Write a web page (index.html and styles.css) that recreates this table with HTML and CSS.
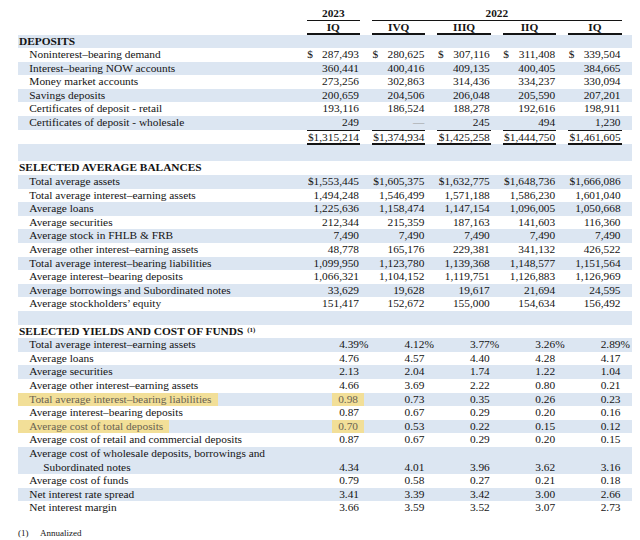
FILE: index.html
```html
<!DOCTYPE html>
<html>
<head>
<meta charset="utf-8">
<link rel="stylesheet" href="styles.css">
</head>
<body>
<div class="page">
  <div class="row head-a">
    <div class="c1 yr">2023</div>
    <div class="c2-5 yr">2022</div>
  </div>
  <div class="row head-b">
    <div class="c1 q">IQ</div>
    <div class="q">IVQ</div>
    <div class="q">IIIQ</div>
    <div class="q">IIQ</div>
    <div class="q">IQ</div>
  </div>

  <div class="rows">
    <div class="row"><div class="sec">DEPOSITS</div></div>
    <div class="row"><div class="lbl">Noninterest–bearing demand</div><div class="v d">$<span>287,493</span></div><div class="v d">$<span>280,625</span></div><div class="v d">$<span>307,116</span></div><div class="v d">$<span>311,408</span></div><div class="v d">$<span>339,504</span></div></div>
    <div class="row"><div class="lbl">Interest–bearing NOW accounts</div><div class="v">360,441</div><div class="v">400,416</div><div class="v">409,135</div><div class="v">400,405</div><div class="v">384,665</div></div>
    <div class="row"><div class="lbl">Money market accounts</div><div class="v">273,256</div><div class="v">302,863</div><div class="v">314,436</div><div class="v">334,237</div><div class="v">330,094</div></div>
    <div class="row"><div class="lbl">Savings deposits</div><div class="v">200,659</div><div class="v">204,506</div><div class="v">206,048</div><div class="v">205,590</div><div class="v">207,201</div></div>
    <div class="row"><div class="lbl">Certificates of deposit - retail</div><div class="v">193,116</div><div class="v">186,524</div><div class="v">188,278</div><div class="v">192,616</div><div class="v">198,911</div></div>
    <div class="row"><div class="lbl">Certificates of deposit - wholesale</div><div class="v">249</div><div class="v dash">—</div><div class="v">245</div><div class="v">494</div><div class="v">1,230</div></div>
    <div class="row total"><div class="lbl"></div><div class="v">$1,315,214</div><div class="v">$1,374,934</div><div class="v">$1,425,258</div><div class="v">$1,444,750</div><div class="v">$1,461,605</div></div>
    <div class="row blank blank-a"></div>

    <div class="row"><div class="sec">SELECTED AVERAGE BALANCES</div></div>
    <div class="row"><div class="lbl">Total average assets</div><div class="v">$1,553,445</div><div class="v">$1,605,375</div><div class="v">$1,632,775</div><div class="v">$1,648,736</div><div class="v">$1,666,086</div></div>
    <div class="row"><div class="lbl">Total average interest–earning assets</div><div class="v">1,494,248</div><div class="v">1,546,499</div><div class="v">1,571,188</div><div class="v">1,586,230</div><div class="v">1,601,040</div></div>
    <div class="row"><div class="lbl">Average loans</div><div class="v">1,225,636</div><div class="v">1,158,474</div><div class="v">1,147,154</div><div class="v">1,096,005</div><div class="v">1,050,668</div></div>
    <div class="row"><div class="lbl">Average securities</div><div class="v">212,344</div><div class="v">215,359</div><div class="v">187,163</div><div class="v">141,603</div><div class="v">116,360</div></div>
    <div class="row"><div class="lbl">Average stock in FHLB &amp; FRB</div><div class="v">7,490</div><div class="v">7,490</div><div class="v">7,490</div><div class="v">7,490</div><div class="v">7,490</div></div>
    <div class="row"><div class="lbl">Average other interest–earning assets</div><div class="v">48,778</div><div class="v">165,176</div><div class="v">229,381</div><div class="v">341,132</div><div class="v">426,522</div></div>
    <div class="row"><div class="lbl">Total average interest–bearing liabilities</div><div class="v">1,099,950</div><div class="v">1,123,780</div><div class="v">1,139,368</div><div class="v">1,148,577</div><div class="v">1,151,564</div></div>
    <div class="row"><div class="lbl">Average interest–bearing deposits</div><div class="v">1,066,321</div><div class="v">1,104,152</div><div class="v">1,119,751</div><div class="v">1,126,883</div><div class="v">1,126,969</div></div>
    <div class="row"><div class="lbl">Average borrowings and Subordinated notes</div><div class="v">33,629</div><div class="v">19,628</div><div class="v">19,617</div><div class="v">21,694</div><div class="v">24,595</div></div>
    <div class="row"><div class="lbl">Average stockholders’ equity</div><div class="v">151,417</div><div class="v">152,672</div><div class="v">155,000</div><div class="v">154,634</div><div class="v">156,492</div></div>
    <div class="row blank"></div>

    <div class="row"><div class="sec">SELECTED YIELDS AND COST OF FUNDS <sup class="fn">(1)</sup></div></div>
    <div class="row"><div class="lbl">Total average interest–earning assets</div><div class="v">4.39<span class="pct">%</span></div><div class="v">4.12<span class="pct">%</span></div><div class="v">3.77<span class="pct">%</span></div><div class="v">3.26<span class="pct">%</span></div><div class="v">2.89<span class="pct">%</span></div></div>
    <div class="row"><div class="lbl">Average loans</div><div class="v">4.76</div><div class="v">4.57</div><div class="v">4.40</div><div class="v">4.28</div><div class="v">4.17</div></div>
    <div class="row"><div class="lbl">Average securities</div><div class="v">2.13</div><div class="v">2.04</div><div class="v">1.74</div><div class="v">1.22</div><div class="v">1.04</div></div>
    <div class="row"><div class="lbl">Average other interest–earning assets</div><div class="v">4.66</div><div class="v">3.69</div><div class="v">2.22</div><div class="v">0.80</div><div class="v">0.21</div></div>
    <div class="row"><div class="lbl"><span class="hl">Total average interest–bearing liabilities</span></div><div class="v"><span class="hl hl-v">0.98</span></div><div class="v">0.73</div><div class="v">0.35</div><div class="v">0.26</div><div class="v">0.23</div></div>
    <div class="row"><div class="lbl">Average interest–bearing deposits</div><div class="v">0.87</div><div class="v">0.67</div><div class="v">0.29</div><div class="v">0.20</div><div class="v">0.16</div></div>
    <div class="row"><div class="lbl"><span class="hl">Average cost of total deposits</span></div><div class="v"><span class="hl hl-v">0.70</span></div><div class="v">0.53</div><div class="v">0.22</div><div class="v">0.15</div><div class="v">0.12</div></div>
    <div class="row"><div class="lbl">Average cost of retail and commercial deposits</div><div class="v">0.87</div><div class="v">0.67</div><div class="v">0.29</div><div class="v">0.20</div><div class="v">0.15</div></div>
    <div class="row two"><div class="lbl">Average cost of wholesale deposits, borrowings and<span class="cont">Subordinated notes</span></div><div class="v">4.34</div><div class="v">4.01</div><div class="v">3.96</div><div class="v">3.62</div><div class="v">3.16</div></div>
    <div class="row"><div class="lbl">Average cost of funds</div><div class="v">0.79</div><div class="v">0.58</div><div class="v">0.27</div><div class="v">0.21</div><div class="v">0.18</div></div>
    <div class="row"><div class="lbl">Net interest rate spread</div><div class="v">3.41</div><div class="v">3.39</div><div class="v">3.42</div><div class="v">3.00</div><div class="v">2.66</div></div>
    <div class="row"><div class="lbl">Net interest margin</div><div class="v">3.66</div><div class="v">3.59</div><div class="v">3.52</div><div class="v">3.07</div><div class="v">2.73</div></div>
  </div>

  <div class="foot"><span class="fnum">(1)</span><span>Annualized</span></div>
</div>
</body>
</html>
```

FILE: styles.css
```css
html, body {
  margin: 0;
  padding: 0;
  background: #ffffff;
}

body {
  font-family: "Liberation Serif", "Times New Roman", serif;
  font-size: 11.35px;
  color: #141414;
}

.page {
  width: 614px;
  margin-left: 18px;
}

.row {
  display: grid;
  grid-template-columns: 276.6px repeat(5, 53.3px);
  column-gap: 12.1px;
  padding-right: 10.4px;
  height: 13.6px;
  line-height: 13.6px;
  white-space: nowrap;
}

.rows > .row:nth-child(odd) {
  background: #dce6f2;
}

.head-a {
  padding-top: 6.5px;
  height: auto;
  line-height: 13px;
}

.head-b {
  height: auto;
  line-height: 12px;
}

.yr, .q {
  font-weight: bold;
  text-align: center;
  border-bottom: 1.5px solid #141414;
}

.c1 {
  grid-column: 2;
}

.c2-5 {
  grid-column: 3 / span 4;
}

.q {
  border-bottom-width: 2px;
}

.sec {
  font-weight: bold;
  padding-left: 1px;
}

.fn {
  font-size: 7px;
  vertical-align: top;
  line-height: 10px;
  margin-left: 1px;
}

.lbl {
  padding-left: 11.3px;
}

.v {
  text-align: right;
  padding-right: 1px;
}

.d {
  display: flex;
  justify-content: space-between;
  padding-left: 0.5px;
}

.dash {
  color: #9a9a9a;
}

.pct {
  margin-right: -0.833em;
}

.total .v {
  border-top: 1px solid #141414;
  border-bottom: 2px solid #141414;
  line-height: 12.6px;
}

.total {
  height: auto;
  background: linear-gradient(to bottom, #ffffff 13.6px, #dce6f2 13.6px);
}

.blank-a {
  height: 16.2px;
}

.hl {
  display: inline-block;
  background: #f2df98;
  color: #6a6352;
}

.lbl .hl {
  margin-left: -11.3px;
  padding-left: 11.3px;
  padding-right: 6px;
}

.hl-v {
  padding: 0 6px;
  margin-right: -5px;
}

.two {
  height: 27.2px;
  align-items: end;
}

.cont {
  display: block;
  padding-left: 14px;
}

.foot {
  display: flex;
  margin-top: 13.5px;
  font-size: 9px;
  line-height: 11px;
}

.fnum {
  width: 22px;
}
```
